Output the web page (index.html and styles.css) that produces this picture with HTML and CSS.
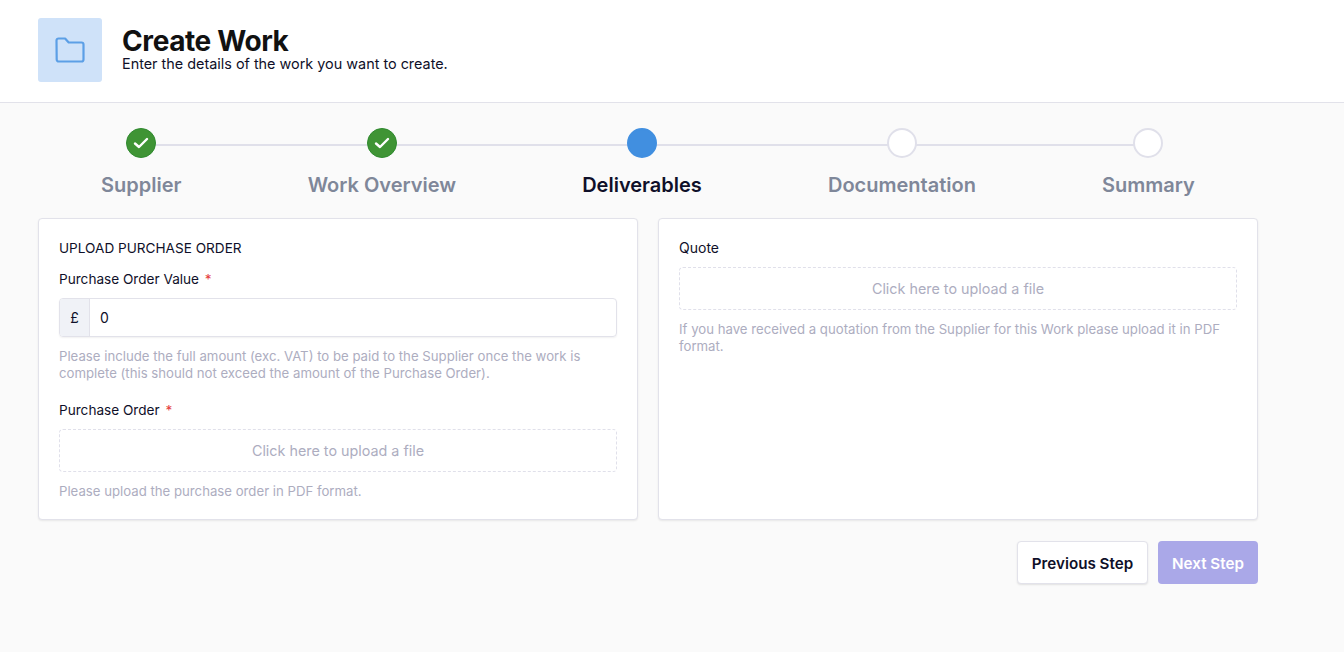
FILE: index.html
```html
<!DOCTYPE html>
<html lang="en">
<head>
    <meta charset="UTF-8">
    <meta name="viewport" content="width=device-width, initial-scale=1.0">
    <title>Create Work</title>
    <link rel="stylesheet" href="styles.css">
</head>
<body>
    <header class="page-header">
        <div class="header-icon">
            <svg width="32" height="28" viewBox="0 0 32 28" fill="none" stroke="#5c9fe6" stroke-width="2.2" stroke-linejoin="round">
                <path d="M2.5 4.5a2 2 0 0 1 2-2h6.6l3.6 4h12.8a2 2 0 0 1 2 2v15a2 2 0 0 1-2 2h-22.800a2 2 0 0 1-2-2z"/>
            </svg>
        </div>
        <div>
            <h1>Create Work</h1>
            <p class="subtitle">Enter the details of the work you want to create.</p>
        </div>
    </header>

    <main class="content">
        <div class="stepper">
            <div class="step-line"></div>
            <div class="step">
                <div class="dot done">
                    <svg width="16" height="12" viewBox="0 0 16 12" fill="none" stroke="#fff" stroke-width="2.4" stroke-linecap="round" stroke-linejoin="round"><path d="M2 6.500l4 3.500 8-8"/></svg>
                </div>
                <div class="step-name">Supplier</div>
            </div>
            <div class="step">
                <div class="dot done">
                    <svg width="16" height="12" viewBox="0 0 16 12" fill="none" stroke="#fff" stroke-width="2.4" stroke-linecap="round" stroke-linejoin="round"><path d="M2 6.500l4 3.500 8-8"/></svg>
                </div>
                <div class="step-name">Work Overview</div>
            </div>
            <div class="step">
                <div class="dot current"></div>
                <div class="step-name active">Deliverables</div>
            </div>
            <div class="step">
                <div class="dot"></div>
                <div class="step-name">Documentation</div>
            </div>
            <div class="step">
                <div class="dot"></div>
                <div class="step-name">Summary</div>
            </div>
        </div>

        <div class="panels">
            <section class="panel">
                <div class="panel-title">UPLOAD PURCHASE ORDER</div>
                <label class="field-label">Purchase Order Value <span class="required">*</span></label>
                <div class="money-input">
                    <span class="prefix">£</span>
                    <span class="value">0</span>
                </div>
                <p class="help">Please include the full amount (exc. VAT) to be paid to the Supplier once the work is complete (this should not exceed the amount of the Purchase Order).</p>
                <label class="field-label second">Purchase Order <span class="required">*</span></label>
                <div class="upload">Click here to upload a file</div>
                <p class="help">Please upload the purchase order in PDF format.</p>
            </section>

            <section class="panel">
                <div class="panel-title quote">Quote</div>
                <div class="upload">Click here to upload a file</div>
                <p class="help">If you have received a quotation from the Supplier for this Work please upload it in PDF format.</p>
            </section>
        </div>

        <div class="actions">
            <button class="btn btn-prev">Previous Step</button>
            <button class="btn btn-next">Next Step</button>
        </div>
    </main>
</body>
</html>
```

FILE: styles.css
```css
* {
    box-sizing: border-box;
}
body {
    margin: 0;
    font-family: Inter, "Liberation Sans", sans-serif;
    background: #fafafa;
    color: #0f1029;
    min-height: 652px;
}
.page-header {
    display: flex;
    align-items: center;
    gap: 20px;
    height: 103px;
    padding: 0 38px 3px;
    background: #fff;
    border-bottom: 1px solid #e2e2ea;
}
.header-icon {
    width: 64px;
    height: 64px;
    display: flex;
    align-items: center;
    justify-content: center;
    background: #cfe2f9;
    border-radius: 3px;
}
h1 {
    margin: 0;
    font-size: 28px;
    line-height: 28px;
    font-weight: 700;
    color: #111;
    letter-spacing: -0.4px;
}
.subtitle {
    margin: 0;
    font-size: 14.4px;
    line-height: 17px;
}
.content {
    width: 1220px;
    margin-left: 38px;
}
.stepper {
    position: relative;
    display: flex;
    justify-content: space-around;
    padding-top: 25px;
}
.step-line {
    position: absolute;
    top: 41px;
    left: 104px;
    width: 1007px;
    height: 2px;
    background: #e0e0ea;
}
.step {
    position: relative;
    display: flex;
    flex-direction: column;
    align-items: center;
}
.dot {
    width: 30px;
    height: 30px;
    display: flex;
    align-items: center;
    justify-content: center;
    background: #fff;
    border: 2px solid #e0e0ea;
    border-radius: 50%;
}
.dot.done {
    background: #3f9435;
    border-color: #2f8a2f;
    border-width: 1px;
}
.dot.current {
    background: #418fe0;
    border-color: #418fe0;
}
.step-name {
    margin-top: 15px;
    font-size: 20px;
    line-height: 24px;
    font-weight: 600;
    color: #7f8799;
}
.step-name.active {
    color: #0f1029;
}
.panels {
    display: grid;
    grid-template-columns: 600px 600px;
    gap: 20px;
    margin-top: 21px;
}
.panel {
    height: 302px;
    padding: 20px;
    background: #fff;
    border: 1px solid #e2e2ea;
    border-radius: 4px;
    box-shadow: 0 1px 2px rgba(0, 0, 0, 0.08);
}
.panel-title {
    font-size: 13.6px;
    line-height: 18px;
    margin-bottom: 14px;
}
.panel-title.quote {
    margin-bottom: 10px;
    font-size: 14px;
}
.field-label {
    display: block;
    font-size: 13.6px;
    line-height: 17px;
}
.field-label.second {
    margin-top: 20px;
}
.required {
    margin-left: 2px;
    color: #e53e3e;
}
.money-input {
    display: flex;
    height: 39px;
    margin-top: 10px;
    font-size: 14px;
    border: 1px solid #e2e2ea;
    border-radius: 4px;
    box-shadow: 0 1px 2px rgba(0, 0, 0, 0.06);
}
.prefix {
    display: flex;
    align-items: center;
    justify-content: center;
    width: 30px;
    background: #f0f2f7;
    border-right: 1px solid #e2e2ea;
    border-radius: 3px 0 0 3px;
}
.value {
    display: flex;
    align-items: center;
    padding-left: 10px;
}
.help {
    margin: 11px 0 0;
    font-size: 13.2px;
    line-height: 17px;
    color: #adadbf;
}
.upload {
    display: flex;
    align-items: center;
    justify-content: center;
    height: 43px;
    margin-top: 10px;
    font-size: 14.35px;
    color: #adadbf;
    border: 1px dashed #e0e0ea;
    border-radius: 4px;
}
.actions {
    display: flex;
    justify-content: flex-end;
    gap: 10px;
    margin-top: 21px;
}
.btn {
    height: 43px;
    padding: 1px 0 0;
    font-family: inherit;
    font-size: 15.2px;
    font-weight: 600;
    white-space: nowrap;
    border-radius: 4px;
}
.btn-prev {
    width: 131px;
    color: #0f1029;
    background: #fff;
    border: 1px solid #e2e2ea;
    box-shadow: 0 1px 2px rgba(0, 0, 0, 0.1);
}
.btn-next {
    width: 100px;
    color: #fff;
    background: #aaa8e8;
    border: 0;
}
```
